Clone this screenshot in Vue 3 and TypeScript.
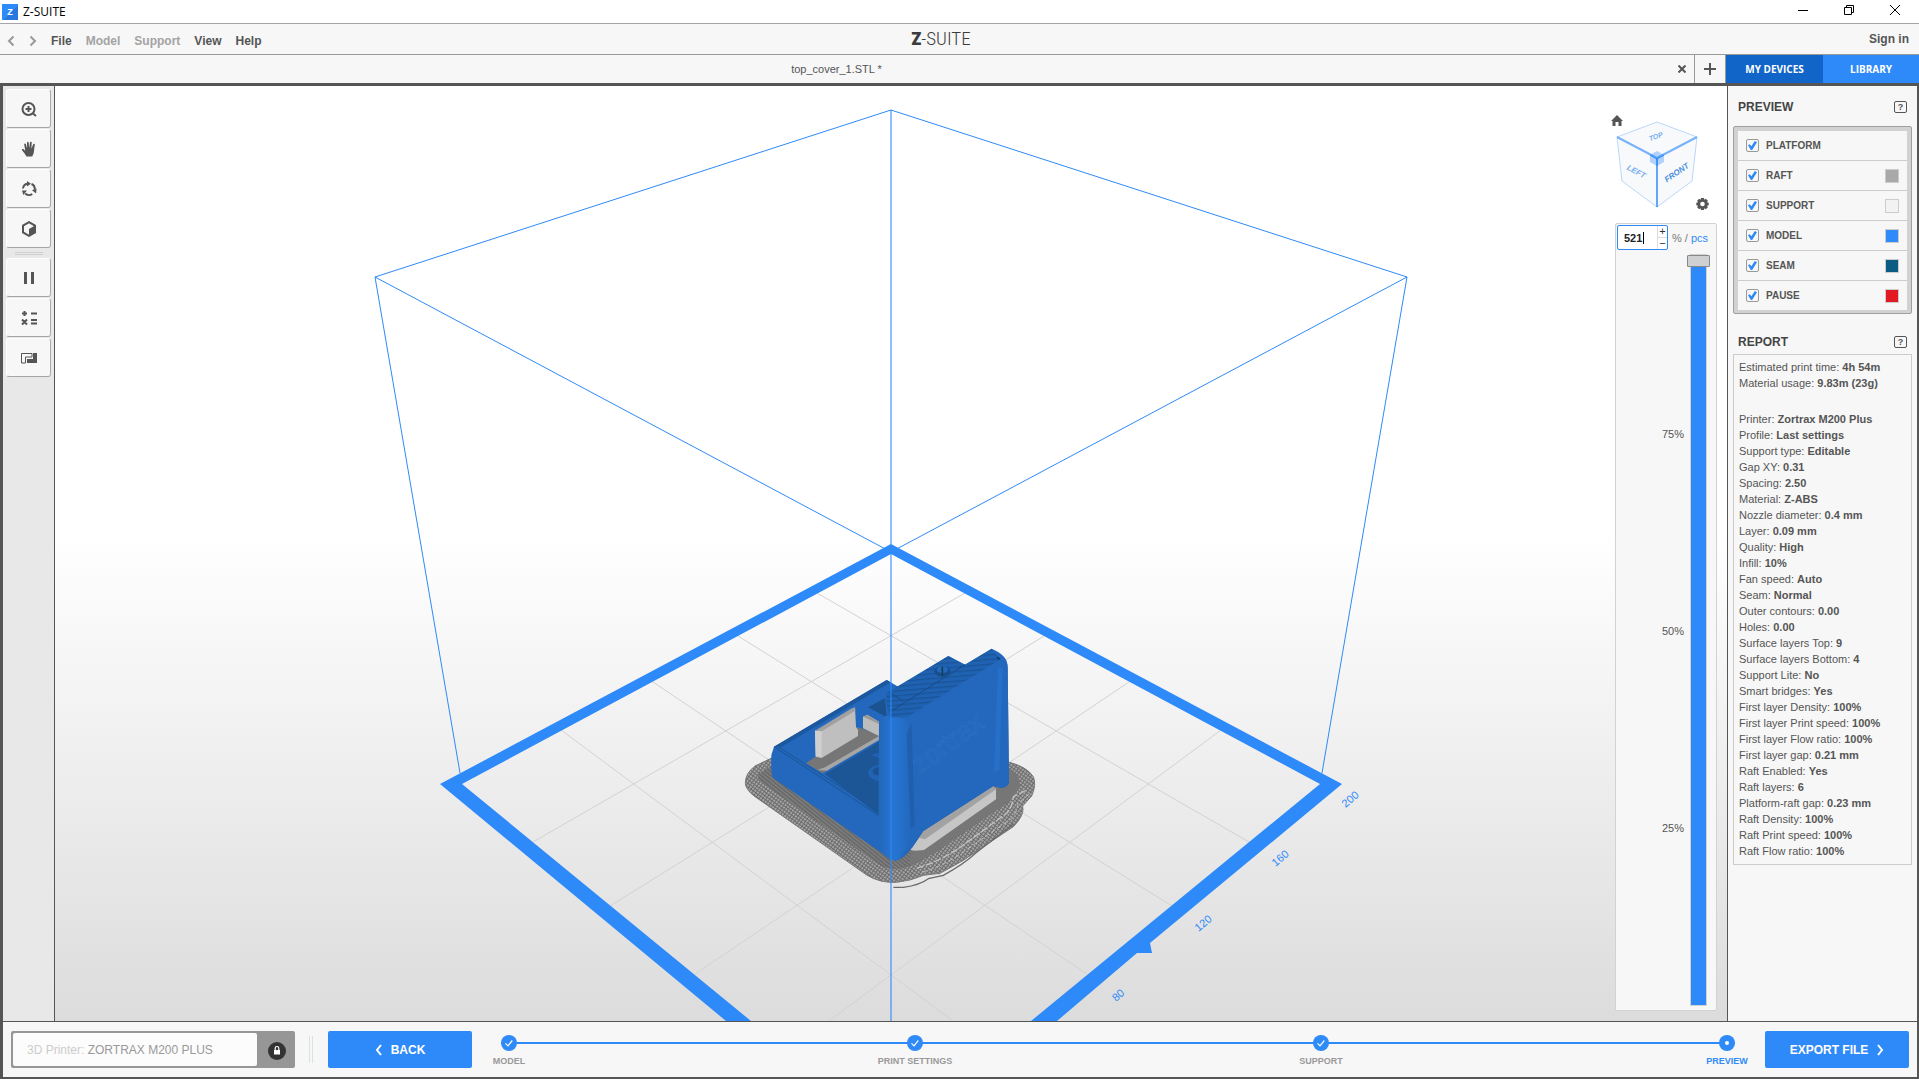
<script setup lang="ts">
import { ref } from 'vue'

interface Layer {
  name: string
  color: string | null
  shown: boolean
}

const layers = ref<Layer[]>([
  { name: 'PLATFORM', color: null, shown: true },
  { name: 'RAFT', color: '#a9a9a9', shown: true },
  { name: 'SUPPORT', color: '#f2f2f2', shown: true },
  { name: 'MODEL', color: '#2e8af8', shown: true },
  { name: 'SEAM', color: '#0b5b82', shown: true },
  { name: 'PAUSE', color: '#e11b22', shown: true },
])

const summary: [string, string][] = [
  ['Estimated print time', '4h 54m'],
  ['Material usage', '9.83m (23g)'],
]

const settings: [string, string][] = [
  ['Printer', 'Zortrax M200 Plus'],
  ['Profile', 'Last settings'],
  ['Support type', 'Editable'],
  ['Gap XY', '0.31'],
  ['Spacing', '2.50'],
  ['Material', 'Z-ABS'],
  ['Nozzle diameter', '0.4 mm'],
  ['Layer', '0.09 mm'],
  ['Quality', 'High'],
  ['Infill', '10%'],
  ['Fan speed', 'Auto'],
  ['Seam', 'Normal'],
  ['Outer contours', '0.00'],
  ['Holes', '0.00'],
  ['Surface layers Top', '9'],
  ['Surface layers Bottom', '4'],
  ['Support Lite', 'No'],
  ['Smart bridges', 'Yes'],
  ['First layer Density', '100%'],
  ['First layer Print speed', '100%'],
  ['First layer Flow ratio', '100%'],
  ['First layer gap', '0.21 mm'],
  ['Raft Enabled', 'Yes'],
  ['Raft layers', '6'],
  ['Platform-raft gap', '0.23 mm'],
  ['Raft Density', '100%'],
  ['Raft Print speed', '100%'],
  ['Raft Flow ratio', '100%'],
]

const menus = [
  { name: 'File', enabled: true },
  { name: 'Model', enabled: false },
  { name: 'Support', enabled: false },
  { name: 'View', enabled: true },
  { name: 'Help', enabled: true },
]

const steps = ['MODEL', 'PRINT SETTINGS', 'SUPPORT', 'PREVIEW']
const layerCount = ref('521')
const level = ref(100)
</script>

<template>
  <div class="app">
    <header class="titlebar">
      <span class="app-icon">Z</span>
      <span class="app-title">Z-SUITE</span>
      <div class="window-controls">
        <button type="button" aria-label="Minimize">
          <svg width="12" height="12" viewBox="0 0 12 12"><path d="M1 6.500h10" /></svg>
        </button>
        <button type="button" aria-label="Restore">
          <svg width="12" height="12" viewBox="0 0 12 12"><path d="M1.500 3.500h7v7h-7zM3.500 3.500v-2h7v7h-2" /></svg>
        </button>
        <button type="button" aria-label="Close">
          <svg width="12" height="12" viewBox="0 0 12 12"><path d="M1 1l10 10M11 1L1 11" /></svg>
        </button>
      </div>
    </header>

    <nav class="menubar">
      <div class="menu-left">
        <button type="button" class="arrow" aria-label="Undo">
          <svg width="8" height="12" viewBox="0 0 8 12"><path d="M6.500 1.500L2 6l4.500 4.500" /></svg>
        </button>
        <button type="button" class="arrow" aria-label="Redo">
          <svg width="8" height="12" viewBox="0 0 8 12"><path d="M1.500 1.500L6 6l-4.500 4.500" /></svg>
        </button>
        <button v-for="m in menus" :key="m.name" type="button" class="menu" :disabled="!m.enabled">{{ m.name }}</button>
      </div>
      <div class="brand"><b>Z</b><span>-SUITE</span></div>
      <div class="menu-right"><a href="#signin">Sign in</a></div>
    </nav>

    <div class="tabs">
      <div class="tab">
        <span class="tab-name">top_cover_1.STL *</span>
        <button type="button" class="tab-close" aria-label="Close tab">
          <svg width="8" height="8" viewBox="0 0 8 8"><path d="M.5.5l7 7M7.500.5l-7 7" /></svg>
        </button>
      </div>
      <button type="button" class="tab-add" aria-label="New tab">
        <svg width="12" height="12" viewBox="0 0 12 12"><path d="M0 6h12M6 0v12" /></svg>
      </button>
      <button type="button" class="top-button devices">MY DEVICES</button>
      <button type="button" class="top-button library">LIBRARY</button>
    </div>

    <div class="workspace">
      <aside class="toolbar">
        <button type="button" aria-label="Zoom">
          <svg width="16" height="16" viewBox="0 0 16 16">
            <circle cx="7.500" cy="8" r="6" class="line" />
            <path d="M7.500 5v6M4.500 8h6M12 12.500l3 2.500" class="line" />
          </svg>
        </button>
        <button type="button" aria-label="Pan">
          <svg width="16" height="16" viewBox="0 0 16 16">
            <path d="M5.500 15.500C4 13 2.500 11 1 9.300c-.5-1 .8-1.600 1.600-1l1.700 1.400L3.200 3.500c-.1-1.200 1.400-1.300 1.700-.3L6.100 7.500 6 1.600C6.100.5 7.500.5 7.700 1.600l.4 5.700.9-6c.3-1 1.700-.8 1.700.3L10.400 7.700l1.800-4.400c.5-1 1.800-.5 1.600.6-.7 3.300-.5 5.100-1 7.600-.3 1.800-1.300 2.700-1.400 4z" class="solid" />
          </svg>
        </button>
        <button type="button" aria-label="Rotate">
          <svg width="16" height="16" viewBox="0 0 16 16">
            <path d="M2 7.500C2.300 4.800 4 3 6.500 2.700M10.500 3c2.300 1 3.500 3 3.200 5.500M11.200 13c-2 1.600-5 1.500-7-.5" class="line" />
            <path d="M6 0l4 2.800L6 5.500zM15.500 7.500l-.4 5L11 9.200zM1 9.500h5L2.300 14z" class="solid" />
          </svg>
        </button>
        <button type="button" aria-label="Perspective">
          <svg width="16" height="16" viewBox="0 0 16 16">
            <path d="M8 1.200l6 3.400v6.800l-6 3.400-6-3.400V4.600z" class="line" />
            <path d="M8 8l6-3.400v6.800l-6 3.400z" class="solid" />
          </svg>
        </button>
        <hr class="grip" />
        <button type="button" aria-label="Pause">
          <svg width="16" height="16" viewBox="0 0 16 16"><path d="M3 2h3v12H3zM10 2h3v12h-3z" class="solid" /></svg>
        </button>
        <button type="button" aria-label="Calculate">
          <svg width="16" height="16" viewBox="0 0 16 16">
            <path d="M3.500 1v5M1 3.500h5M10 3.500h6M10 10h6M10 13.500h6M1 9.500l5 5M6 9.500l-5 5" class="line" />
          </svg>
        </button>
        <button type="button" aria-label="Cross section">
          <svg width="16" height="16" viewBox="0 0 16 16">
            <path d="M.5 3.500h10.500v3.500H4.500v6H.5z" class="thin" />
            <path d="M12 3h4v10H6V9h6z" class="solid" />
          </svg>
        </button>
      </aside>

      <main class="viewport">
        <svg class="scene" viewBox="55 86 1672 935" preserveAspectRatio="xMidYMid slice">
          <defs>
            <pattern id="edge" width="9" height="9" patternUnits="userSpaceOnUse" patternTransform="rotate(36)">
              <rect width="9" height="9" fill="#6c6c6c" />
              <rect y="1" width="6" height="4" fill="#c0c0c0" />
            </pattern>
            <pattern id="bed" width="9" height="9" patternUnits="userSpaceOnUse" patternTransform="rotate(39)">
              <rect width="9" height="9" fill="#7b7b7b" />
              <rect width="9" height="3" fill="#626262" />
            </pattern>
            <pattern id="bedfine" width="6" height="6" patternUnits="userSpaceOnUse" patternTransform="rotate(-56)">
              <rect width="6" height="6" fill="#7c7c7c" />
              <rect width="6" height="2" fill="#6b6b6b" />
            </pattern>
            <pattern id="layer" width="300" height="14" patternUnits="userSpaceOnUse" patternTransform="rotate(-5)">
              <rect width="300" height="14" fill="#1f62b2" />
              <rect width="300" height="4" fill="#1a5499" />
            </pattern>
            <linearGradient id="pillar" x1="0" x2="1" y1="0" y2="0">
              <stop offset="0" stop-color="#2267b9" />
              <stop offset=".45" stop-color="#2775d4" />
              <stop offset="1" stop-color="#2268bc" />
            </linearGradient>
          </defs>

          <g fill="none" stroke="#d2d2d2" stroke-width="1">
            <path d="M817 593L1249 842M738 636L1172 906M653 682L1087 974M561 730L953 1021" />
            <path d="M965 593L533 842M1044 636L610 906M1129 682L695 974M1221 730L829 1021" />
          </g>
          <g fill="none" stroke="#2e8af8" stroke-width="1">
            <path d="M891 110L375 277L891 552L1407 277ZM375 277L460 773M1407 277L1322 773" />
          </g>
          <path d="M891 544L440 784L726 1021H751L462 784L891 554L1320 784L1031 1021H1057L1137 953H1152L1150 943L1342 784Z" fill="#2e8af8" />

          <g transform="translate(730 630) scale(.33333)">
            <path d="M123 385L75 408Q45 430 46 462Q50 482 75 500L410 735Q450 760 500 757Q545 752 580 736L630 730Q700 695 760 650L850 590Q885 555 878 528L905 498Q920 465 910 440Q890 410 838 397L500 300Z" fill="url(#edge)" stroke="#777" stroke-width="3" />
            <path d="M123 408L86 432Q80 445 88 452L440 700Q490 735 560 700L620 665L800 540Q850 515 868 470Q875 440 838 415L500 330Z" fill="url(#bed)" />
            <path d="M545 660L800 470L838 415Q875 440 868 470Q850 515 800 540L620 665L540 705Z" fill="url(#bedfine)" />
            <path d="M560 715Q640 690 700 645L830 550Q848 530 850 500L890 480" fill="none" stroke="#c4c4c4" stroke-width="4" stroke-dasharray="22 6" />
            <path d="M575 727Q650 705 715 655L845 565Q862 545 864 520L898 492" fill="none" stroke="#bbb" stroke-width="3" stroke-dasharray="14 8" />
            <path d="M490 772H520Q570 765 595 746L640 736Q700 704 740 667L850 583" fill="none" stroke="#6a6a6a" stroke-width="4" />

            <path d="M540 660L580 606L790 470L798 476V508L582 660L555 662Z" fill="#c6c6c6" />
            <path d="M560 622L580 603L790 468L798 478L585 628Z" fill="#a2a2a2" />
            <path d="M132 350L470 150L505 170L655 78L705 104L785 56Q832 75 833 110L837 460Q825 478 805 472L790 468L580 603L545 655Q520 690 495 692Q475 688 460 672L130 445Q122 438 124 375Z" fill="#2368bc" />
            <path d="M132 350L470 150L482 157L150 353Z" fill="#1c589f" />
            <path d="M415 232L465 205L470 262Z" fill="#1b5290" />
            <path d="M285 432L447 335V555Z" fill="#1c5697" />
            <path d="M228 400L385 292L447 315V328L278 430Z" fill="#767676" />
            <path d="M262 420L290 422L447 330V318L285 412Z" fill="#a6a6a6" />
            <path d="M255 302L275 298L375 232L378 290L384 300V318L275 384L257 380Z" fill="#bfbfbf" />
            <path d="M255 302L275 300V382L257 378Z" fill="#cfcfcf" />
            <path d="M255 302L363 236L375 232L376 242L275 304Z" fill="#a0a0a0" />
            <path d="M399 260L412 254L447 275V318L399 295Z" fill="#bdbdbd" />
            <path d="M399 260L412 254L447 275V282L408 264Z" fill="#999" />
            <path d="M424 375L447 368V384ZM447 404Q414 410 414 428Q416 448 447 454Z" fill="#2162b2" />
            <path d="M447 412Q428 414 428 425Q430 434 447 436Z" fill="#1a5190" />
            <path d="M132 350L447 557M148 352L447 546" fill="none" stroke="#1b5495" stroke-width="3" />

            <path d="M468 190L655 78L705 104L785 56L812 88L530 262L482 265L470 225Z" fill="url(#layer)" />
            <path d="M484 243L705 104M482 190L520 213" fill="none" stroke="#174b87" stroke-width="3" />
            <ellipse cx="637" cy="124" rx="24" ry="16" fill="#184d8b" />
            <ellipse cx="637" cy="119" rx="17" ry="10" fill="#2368bc" />
            <path d="M637 110V138" stroke="#0d4252" stroke-width="5" />
            <path d="M530 265L812 88Q820 84 818 78Q833 90 833 115L837 460Q825 478 805 472L790 468L580 603L545 655Z" fill="#2368bc" />
            <path d="M804 115L818 112L808 418L792 428Z" fill="#2770c9" />
            <path d="M800 82L810 88" stroke="#0e3f78" stroke-width="5" />
            <path d="M447 275Q460 250 482 262Q530 262 545 278L545 600Q530 682 495 692Q475 688 460 672L445 655Z" fill="url(#pillar)" />
            <path d="M530 310L545 280L554 590L542 595Z" fill="#1f5fae" />
            <text x="570" y="432" transform="rotate(-36 570 432)" class="emboss">zortrax</text>
          </g>

          <path d="M891 110V1021" stroke="#2e8af8" stroke-opacity=".55" stroke-width="2" />

          <g class="scale">
            <text transform="translate(1350 799) rotate(-40)" y="4">200</text>
            <text transform="translate(1280 858) rotate(-40)" y="4">160</text>
            <text transform="translate(1203 923) rotate(-40)" y="4">120</text>
            <text transform="translate(1118 995) rotate(-40)" y="4">80</text>
          </g>
        </svg>

        <div class="side">
          <svg class="cube" width="101" height="110" viewBox="1610 110 101 110">
            <path d="M1611 121l6-6 6 6h-1.500v5h-3v-4h-3v4h-3v-5z" fill="#555" />
            <path d="M1657 122L1697 137L1692 181L1657 207L1622 181L1617 137Z" fill="#f8f9fb" stroke="#b9d8fc" />
            <path d="M1617 137L1657 158L1697 137" fill="none" stroke="#77b2fa" stroke-width="2" />
            <path d="M1657 158V207" stroke="#2e8af8" stroke-width="1.500" />
            <path d="M1657 151l7 4v7l-7 4-7-4v-7z" fill="#2e8af8" fill-opacity=".35" />
            <path d="M1650 155l7 4 7-4M1657 159v7" fill="none" stroke="#2e8af8" />
            <text transform="translate(1656 137) rotate(-20)" class="top">TOP</text>
            <text transform="translate(1636 172) rotate(28)">LEFT</text>
            <text transform="translate(1677 173) rotate(-34)" class="front">FRONT</text>
            <path d="M1701 198h3l.4 1.700 1.500-.9 2 2-.9 1.500 1.700.4v2.600l-1.700.4.900 1.500-2 2-1.500-.9-.4 1.700h-3l-.4-1.700-1.500.9-2-2 .9-1.500-1.700-.4v-2.600l1.700-.4-.9-1.500 2-2 1.500.9z" fill="#555" />
            <circle cx="1702.500" cy="204" r="2.300" fill="#fff" />
          </svg>

          <section class="levels">
            <div class="level-row">
              <div class="spinner">
                <input v-model="layerCount" type="text" aria-label="Layer" />
                <i class="caret"></i>
                <div class="spin-buttons">
                  <button type="button" aria-label="Up">+</button>
                  <button type="button" aria-label="Down">−</button>
                </div>
              </div>
              <span class="unit">% / <a href="#pcs">pcs</a></span>
            </div>
            <div class="level-body">
              <div class="marks"><span>75%</span><span>50%</span><span>25%</span></div>
              <input v-model="level" class="range" type="range" min="0" max="100" aria-label="Visible layers" />
            </div>
          </section>
        </div>
      </main>

      <aside class="panel">
        <div class="heading">
          <h2>PREVIEW</h2>
          <button type="button" class="help" aria-label="Preview help">?</button>
        </div>
        <div class="layers">
          <label v-for="l in layers" :key="l.name" class="layer">
            <input v-model="l.shown" type="checkbox" />
            <span>{{ l.name }}</span>
            <i v-if="l.color" class="swatch" :style="{ background: l.color }"></i>
          </label>
        </div>
        <div class="heading report-heading">
          <h2>REPORT</h2>
          <button type="button" class="help" aria-label="Report help">?</button>
        </div>
        <div class="report">
          <p v-for="[k, v] in summary" :key="k">{{ k }}: <b>{{ v }}</b></p>
          <div class="report-gap"></div>
          <p v-for="[k, v] in settings" :key="k">{{ k }}: <b>{{ v }}</b></p>
        </div>
      </aside>
    </div>

    <footer class="footer">
      <div class="printer">
        <div class="printer-name"><span>3D Printer:</span> ZORTRAX M200 PLUS</div>
        <button type="button" class="lock" aria-label="Locked">
          <svg width="18" height="18" viewBox="0 0 18 18">
            <circle cx="9" cy="9" r="9" fill="#333" />
            <path d="M6 8h6v4.500H6z" fill="#fff" />
            <path d="M7.200 8V6.300a1.800 1.800 0 0 1 3.600 0V8" fill="none" stroke="#fff" stroke-width="1.200" />
          </svg>
        </button>
      </div>
      <div class="divider"></div>
      <button type="button" class="action">
        <svg width="8" height="12" viewBox="0 0 8 12"><path d="M6 1L2 6l4 5" /></svg>
        BACK
      </button>
      <ol class="steps">
        <li v-for="(s, i) in steps" :key="s" :class="{ current: i === 3 }">
          <svg width="16" height="16" viewBox="0 0 16 16">
            <circle cx="8" cy="8" r="8" fill="#2e8af8" />
            <circle v-if="i === 3" cx="8" cy="8" r="2" fill="#fff" />
            <path v-else d="M4.500 8.300L7 10.800l4.300-5.300" fill="none" stroke="#fff" stroke-width="1.200" />
          </svg>
          <span>{{ s }}</span>
        </li>
      </ol>
      <button type="button" class="action">
        EXPORT FILE
        <svg width="8" height="12" viewBox="0 0 8 12"><path d="M2 1l4 5-4 5" /></svg>
      </button>
    </footer>
  </div>
</template>

<style>
body {
  margin: 0;
  overflow: hidden;
}
</style>

<style scoped>
* {
  box-sizing: border-box;
}
button {
  margin: 0;
  padding: 0;
  border: 0;
  background: none;
  font: inherit;
  color: inherit;
}
svg {
  display: block;
}
a {
  text-decoration: none;
}
.app {
  display: flex;
  flex-direction: column;
  height: 100vh;
  font: 11px/16px 'Liberation Sans', Arial, sans-serif;
  color: #555;
  background: #f7f7f7;
}

.titlebar {
  display: flex;
  align-items: center;
  flex: none;
  height: 24px;
  padding: 0 1px 0 2px;
  background: #fff;
  border-bottom: 1px solid #a5a5a5;
}
.app-icon {
  width: 16px;
  height: 16px;
  margin-right: 5px;
  background: linear-gradient(135deg, #2e8af8 55%, #2877dc 55%);
  color: #fff;
  font-weight: bold;
  font-size: 9px;
  text-align: center;
}
.app-title {
  color: #000;
  font: 12px/16px 'Open Sans', sans-serif;
}
.window-controls {
  display: flex;
  margin-left: auto;
  align-self: stretch;
  padding-bottom: 3px;
}
.window-controls button {
  display: flex;
  align-items: center;
  justify-content: center;
  width: 46px;
}
.window-controls path {
  fill: none;
  stroke: #000;
}

.menubar {
  display: grid;
  grid-template-columns: 49fr auto 51fr;
  align-items: center;
  flex: none;
  height: 31px;
  border-bottom: 1px solid #999;
}
.menu-left {
  display: flex;
  align-items: center;
  padding: 3px 0 0 7px;
}
.arrow {
  width: 8px;
  margin-right: 14px;
}
.arrow path {
  fill: none;
  stroke: #999;
  stroke-width: 2;
}
.menu {
  margin-right: 14px;
  font-size: 12px;
  font-weight: bold;
}
.menu:disabled {
  color: #a3a3a3;
}
.brand {
  display: flex;
  align-items: center;
  color: #3c3c3c;
  font: 300 19px/28px 'Liberation Sans Narrow', 'Roboto Condensed', Lato, sans-serif;
}
.brand b {
  font-weight: 900;
}
.menu-right {
  text-align: right;
  padding-right: 10px;
}
.menu-right a {
  font-size: 12px;
  font-weight: bold;
  color: #555;
}

.tabs {
  display: flex;
  flex: none;
  height: 31px;
  border-bottom: 3px solid #555;
}
.tab {
  flex: 1;
  display: flex;
  align-items: center;
  padding-left: 3px;
  border-right: 1px solid #999;
}
.tab-name {
  flex: 1;
  text-align: center;
}
.tab-close {
  display: flex;
  justify-content: center;
  width: 24px;
}
.tab-close path {
  stroke: #555;
  stroke-width: 2;
}
.tab-add {
  display: flex;
  align-items: center;
  justify-content: center;
  width: 31px;
  border-right: 1px solid #999;
}
.tab-add path {
  stroke: #555;
  stroke-width: 2;
}
.top-button {
  width: 96px;
  color: #fff;
  font: bold 10px/16px 'Open Sans', sans-serif;
}
.devices {
  width: 97px;
  background: #1164c8;
}
.library {
  background: #2e8af8;
}

.workspace {
  flex: 1;
  display: flex;
  min-height: 0;
  border: solid #555;
  border-width: 0 2px 1px 3px;
}
.toolbar {
  display: flex;
  flex-direction: column;
  gap: 1px;
  flex: none;
  width: 52px;
  padding: 3px 3px 0;
  background: #e8e8e8;
  border-right: 1px solid #555;
}
.toolbar button {
  display: flex;
  align-items: center;
  justify-content: center;
  height: 39px;
  background: #f7f7f7;
  border: 1px solid #fff;
  border-right-color: #aaa;
  border-bottom-color: #a5a5a5;
  border-radius: 3px;
}
.solid {
  fill: #555;
}
.line {
  fill: none;
  stroke: #555;
  stroke-width: 2;
}
.thin {
  fill: none;
  stroke: #555;
  stroke-width: 1;
}
.grip {
  width: 28px;
  height: 3px;
  margin: 3px auto 2px;
  border: solid #d0d0d0;
  border-width: 1px 0;
}

.viewport {
  position: relative;
  flex: 1;
  min-width: 0;
  background: linear-gradient(#fff 48%, #dcdcdc);
}
.scene {
  width: 100%;
  height: 100%;
}
.emboss {
  font: 80px 'Liberation Sans', Arial, sans-serif;
  fill: none;
  stroke: #2b71c6;
  stroke-width: 2;
}
.scale text {
  font: 11px 'Liberation Sans', Arial, sans-serif;
  fill: #2e8af8;
  text-anchor: middle;
}
.side {
  position: absolute;
  top: 24px;
  right: 10px;
  bottom: 10px;
  display: flex;
  flex-direction: column;
  gap: 3px;
  width: 102px;
}
.cube {
  flex: none;
  margin-left: -5px;
}
.cube text {
  font: italic bold 8px 'Liberation Sans', Arial, sans-serif;
  fill: #77aef0;
  text-anchor: middle;
  dominant-baseline: middle;
}
.cube .top {
  font-size: 7px;
}
.cube .front {
  fill: #4d8fe0;
}
.levels {
  flex: 1;
  display: flex;
  flex-direction: column;
  min-height: 0;
  padding: 1px;
  background: #f7f7f7;
  border: 1px solid #d2d2d2;
  border-radius: 2px;
}
.level-row {
  display: flex;
  align-items: center;
  gap: 4px;
}
.spinner {
  position: relative;
  display: flex;
  width: 51px;
  height: 25px;
  background: #fff;
  border: 1px solid #2e8af8;
  border-radius: 2px;
}
.spinner input {
  width: 39px;
  padding: 0 0 0 6px;
  border: 0;
  background: none;
  outline: none;
  font: bold 11px/16px 'Liberation Sans', Arial, sans-serif;
  color: #222;
}
.caret {
  position: absolute;
  left: 25px;
  top: 6px;
  width: 1px;
  height: 12px;
  background: #000;
}
.spin-buttons {
  display: flex;
  flex-direction: column;
  width: 10px;
  border-left: 1px solid #ddd;
}
.spin-buttons button {
  flex: 1;
  font-size: 11px;
  line-height: 11px;
  color: #333;
}
.spin-buttons button + button {
  border-top: 1px solid #ddd;
}
.unit {
  color: #777;
}
.unit a {
  color: #2e8af8;
}
.level-body {
  flex: 1;
  display: flex;
  min-height: 0;
  padding: 4px 5px 3px 0;
}
.marks {
  flex: 1;
  display: flex;
  flex-direction: column;
  padding: 82px 3px 80px 0;
}
.marks span {
  flex: 1;
  display: flex;
  align-items: center;
  justify-content: flex-end;
}
.range {
  appearance: none;
  writing-mode: vertical-lr;
  direction: rtl;
  width: 23px;
  height: 100%;
  margin: 0;
  background: none;
}
.range::-webkit-slider-runnable-track {
  width: 17px;
  height: 100%;
  background: #2e8af8;
  border: 1px solid #d2d2d2;
}
.range::-webkit-slider-thumb {
  appearance: none;
  width: 23px;
  height: 12px;
  margin-left: -4px;
  background: #cfd0d1;
  border: 1px solid #888;
  border-radius: 1px;
}

.panel {
  flex: none;
  width: 190px;
  padding: 0 5px;
  border-left: 1px solid #555;
}
.heading {
  display: flex;
  align-items: center;
  justify-content: space-between;
  height: 40px;
  padding: 2px 5px 0;
}
.report-heading {
  padding-top: 16px;
}
h2 {
  margin: 0;
  font-size: 12px;
  line-height: 16px;
  font-weight: bold;
  color: #444;
}
.help {
  width: 13px;
  height: 12px;
  border: 1px solid #555;
  border-radius: 2px;
  font-size: 9px;
  line-height: 10px;
  font-weight: bold;
}
.layers {
  padding: 4px 4px 3px;
  background: #d2d2d2;
  border: 1px solid #a0a0a0;
  border-radius: 2px;
}
.layer {
  display: flex;
  align-items: center;
  height: 30px;
  padding: 0 8px;
  background: #f7f7f7;
  border-bottom: 1px solid #ccc;
  font-size: 10px;
  font-weight: bold;
}
.layer:last-child {
  height: 29px;
  border-bottom: 0;
}
.layer input {
  appearance: none;
  display: flex;
  align-items: center;
  justify-content: center;
  width: 13px;
  height: 13px;
  margin: 0 7px 0 0;
  background: #f7f7f7;
  border: 1px solid #999;
  border-radius: 2px;
}
.layer input:checked::after {
  content: '';
  width: 9px;
  height: 9px;
  background: #2e8af8;
  clip-path: polygon(0 48%, 18% 36%, 38% 58%, 76% 0, 100% 14%, 46% 100%, 32% 100%);
}
.swatch {
  width: 14px;
  height: 14px;
  margin-left: auto;
  border: 1px solid #ccc;
}
.report {
  padding: 4px 5px 5px;
  border: 1px solid #ccc;
}
.report p {
  margin: 0;
  white-space: nowrap;
}
.report-gap {
  height: 20px;
}

.footer {
  display: flex;
  align-items: center;
  flex: none;
  height: 57px;
  padding: 0 8px;
  border: solid #555;
  border-width: 0 2px 2px 3px;
}
.printer {
  display: flex;
  width: 284px;
  height: 37px;
  padding: 2px;
  background: #969696;
  border-radius: 2px;
}
.printer-name {
  flex: 1;
  padding-left: 14px;
  background: #fcfcfc;
  border-radius: 2px;
  font-size: 12px;
  line-height: 34px;
  color: #999;
}
.printer-name span {
  color: #ccc;
}
.lock {
  display: flex;
  align-items: center;
  justify-content: center;
  width: 36px;
  padding: 2px 0 0 3px;
}
.divider {
  width: 4px;
  height: 27px;
  margin: 0 15px 0 14px;
  border: solid #dce1e6;
  border-width: 0 1px;
}
.action {
  display: flex;
  align-items: center;
  justify-content: center;
  gap: 8px;
  width: 144px;
  height: 37px;
  background: #2e8af8;
  border-radius: 2px;
  color: #fff;
  font-size: 12px;
  font-weight: bold;
}
.action path {
  fill: none;
  stroke: #fff;
  stroke-width: 2;
}
.steps {
  flex: 1;
  display: flex;
  justify-content: space-between;
  margin: 0 30px 0 29px;
  padding: 5px 0 0;
  list-style: none;
  background: linear-gradient(#2e8af8, #2e8af8) no-repeat 0 12px / 100% 2px;
}
.steps li {
  display: flex;
  flex-direction: column;
  align-items: center;
  gap: 2px;
  width: 16px;
  font-size: 9px;
  font-weight: bold;
  white-space: nowrap;
  color: #999;
}
.steps .current {
  color: #2e8af8;
}
</style>
